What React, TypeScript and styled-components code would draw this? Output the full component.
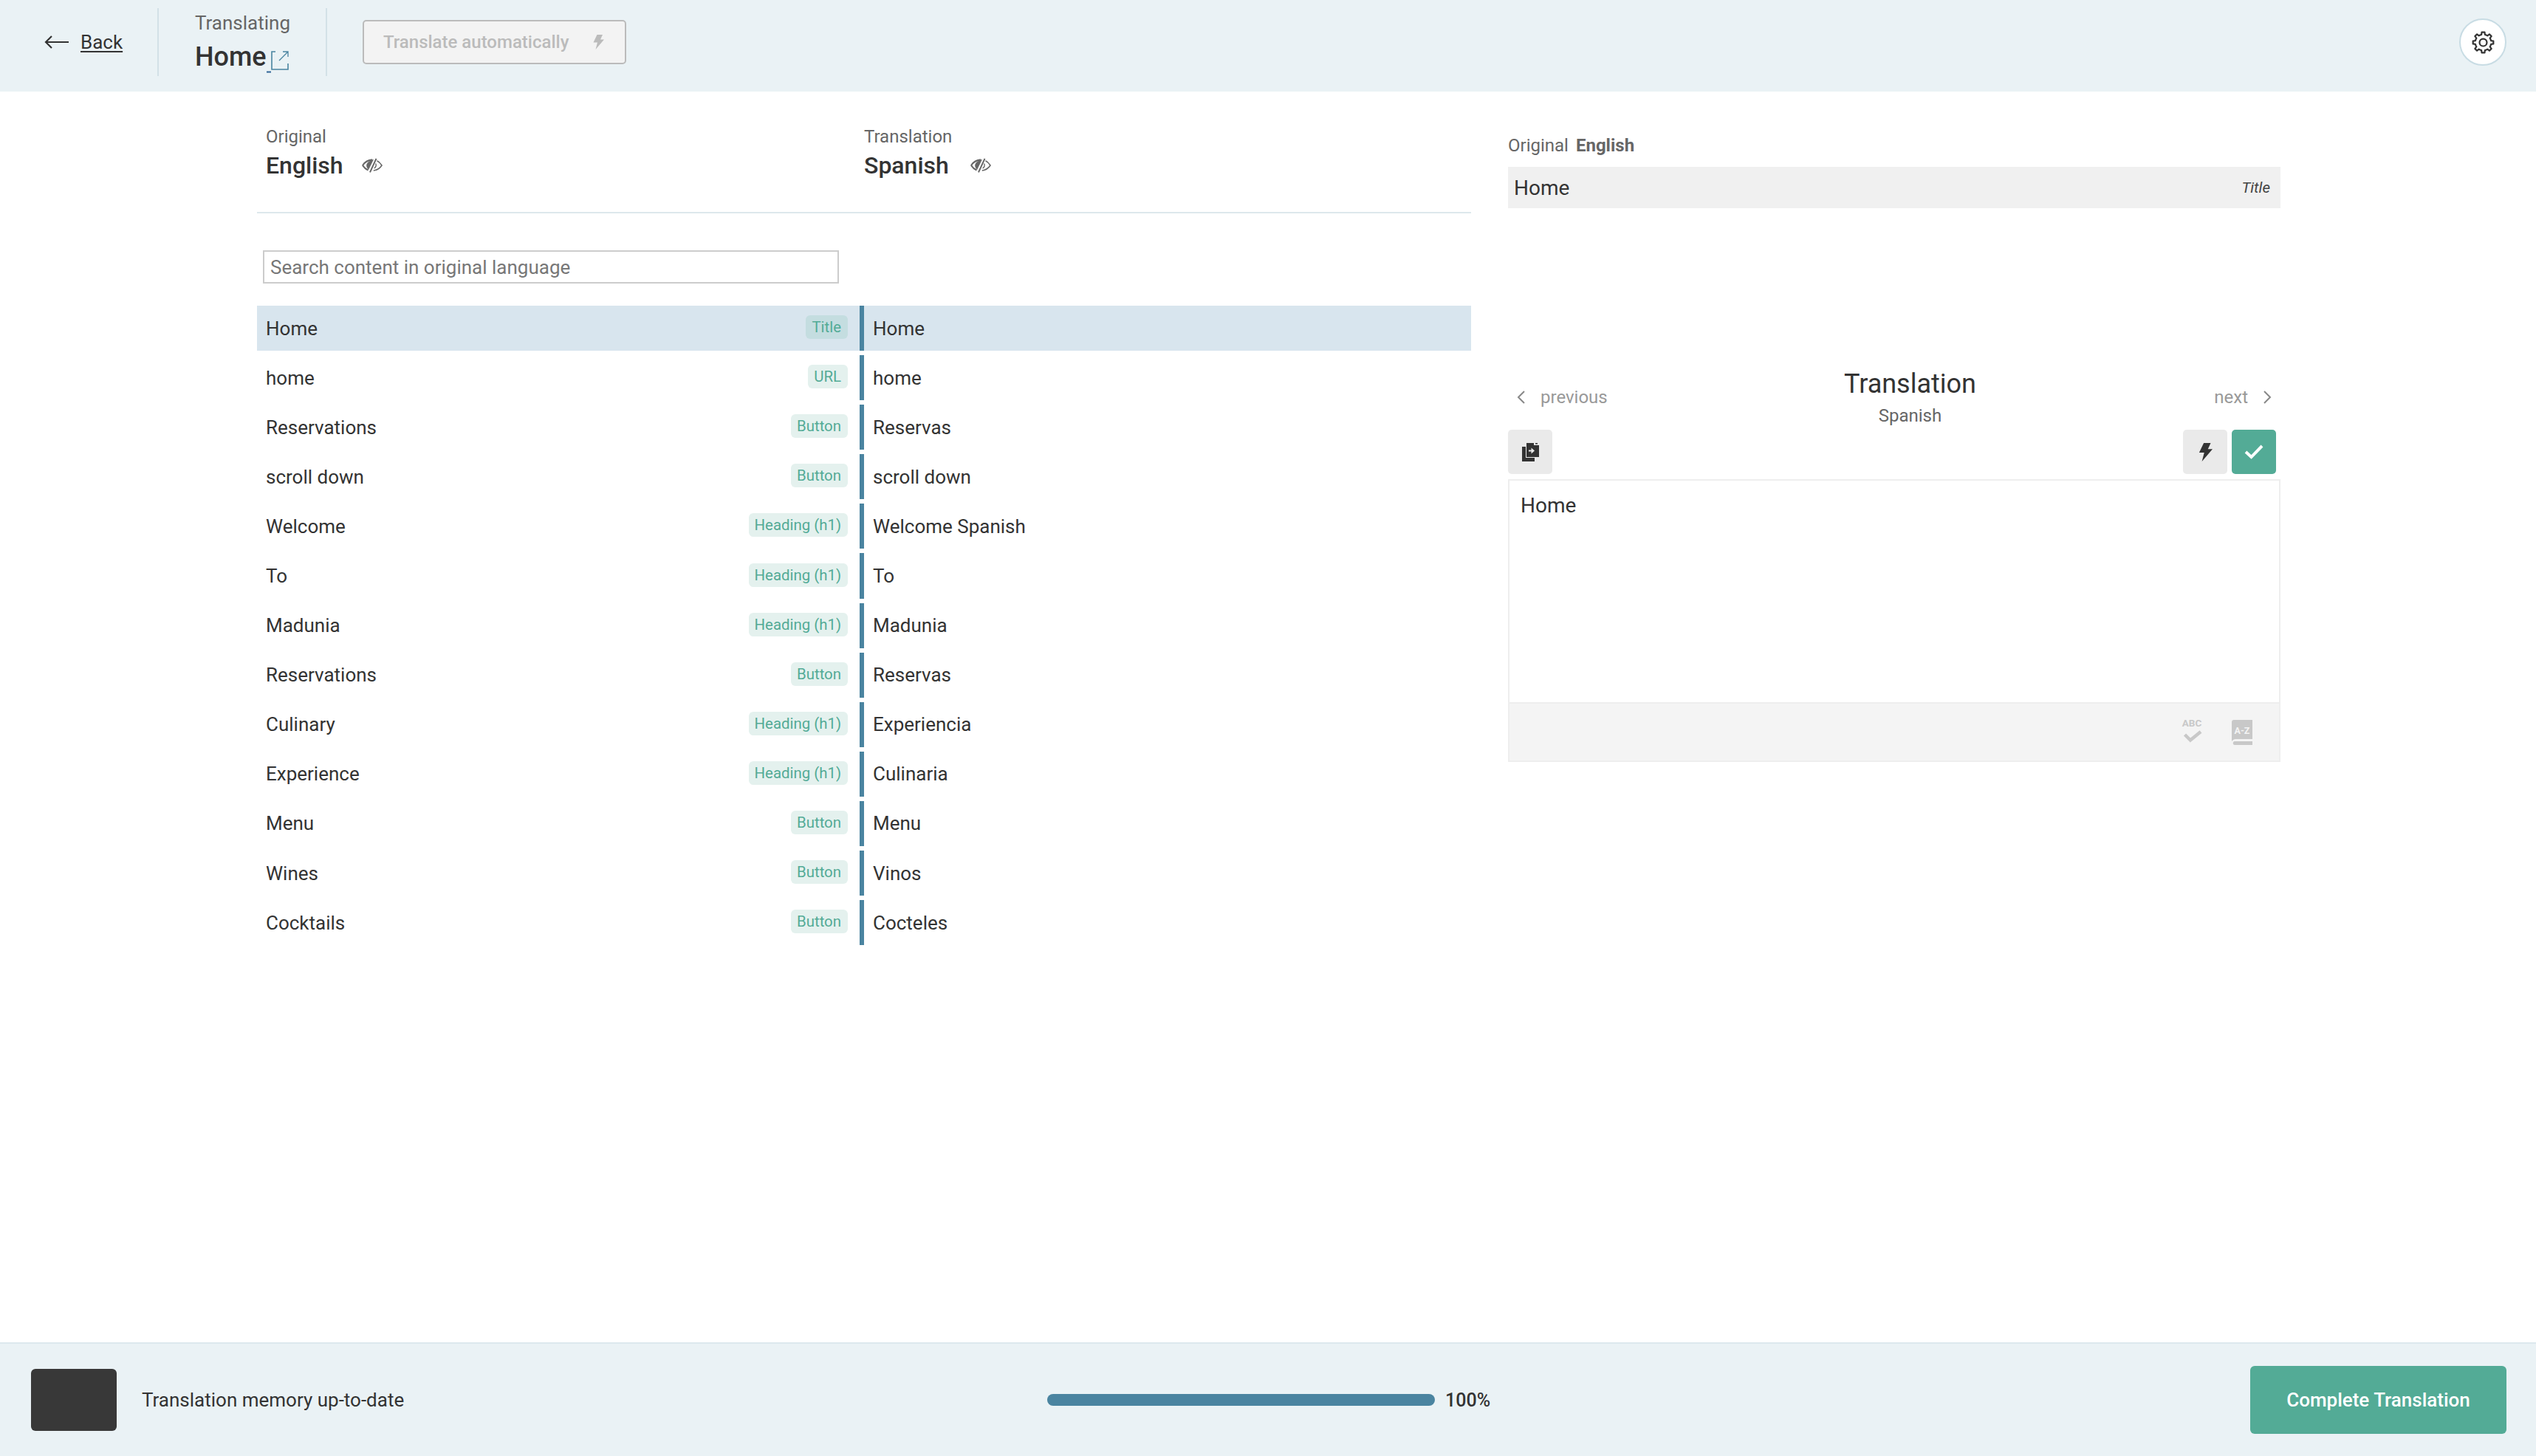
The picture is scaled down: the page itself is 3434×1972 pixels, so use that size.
import React from "react";
import styled, { createGlobalStyle } from "styled-components";

const GlobalStyle = createGlobalStyle`
  html, body {
    margin: 0;
    padding: 0;
    background: #fff;
  }
  * {
    box-sizing: border-box;
  }
`;

type RowData = { source: string; kind: string; target: string };

const rows: RowData[] = [
  { source: "Home", kind: "Title", target: "Home" },
  { source: "home", kind: "URL", target: "home" },
  { source: "Reservations", kind: "Button", target: "Reservas" },
  { source: "scroll down", kind: "Button", target: "scroll down" },
  { source: "Welcome", kind: "Heading (h1)", target: "Welcome Spanish" },
  { source: "To", kind: "Heading (h1)", target: "To" },
  { source: "Madunia", kind: "Heading (h1)", target: "Madunia" },
  { source: "Reservations", kind: "Button", target: "Reservas" },
  { source: "Culinary", kind: "Heading (h1)", target: "Experiencia" },
  { source: "Experience", kind: "Heading (h1)", target: "Culinaria" },
  { source: "Menu", kind: "Button", target: "Menu" },
  { source: "Wines", kind: "Button", target: "Vinos" },
  { source: "Cocktails", kind: "Button", target: "Cocteles" },
];

// gear outline with 8 teeth
const gearPath = () => {
  const points: string[] = [];
  const teeth = 8;
  for (let i = 0; i < teeth; i++) {
    const a = (i / teeth) * Math.PI * 2 - Math.PI / 2;
    const step = (Math.PI * 2) / teeth;
    const pts: [number, number][] = [
      [a - step * 0.5, 9.8],
      [a - step * 0.28, 9.8],
      [a - step * 0.18, 12.6],
      [a + step * 0.18, 12.6],
      [a + step * 0.28, 9.8],
    ];
    pts.forEach(([t, r]) => {
      points.push(`${(14 + r * Math.cos(t)).toFixed(2)} ${(14 + r * Math.sin(t)).toFixed(2)}`);
    });
  }
  return `M${points.join("L")}Z`;
};

const BoltIcon = ({ size = 20, color = "#333" }: { size?: number; color?: string }) => (
  <svg width={size} height={size * 1.25} viewBox="0 0 16 20" fill={color}>
    <path d="M6.5 0H14L11 6.6H16L4.5 20L7 10.4H1.5Z" />
  </svg>
);

const EyeOffIcon = () => (
  <svg width="28" height="20" viewBox="0 0 28 20" fill="none" stroke="#666">
    <path d="M1 10C4 5.5 8 2.8 14 2.4" strokeWidth="2.2" />
    <path d="M1 10C3 13 5 15 8.5 16.5" strokeWidth="2.2" />
    <path d="M15.5 2.2C11 3 6.5 6.5 6.5 10C6.5 12 7.5 14 9 15.5Z" fill="#666" strokeWidth="0.6" />
    <path d="M19.5 0.8L11 19.4" strokeWidth="2" />
    <path d="M20.5 3.8C23.2 5 25.2 7.2 27 10C24.6 13.6 21 16.4 15.8 17" strokeWidth="1.6" />
    <path d="M18.6 7.5C20 9.8 19 12.6 16.6 14" strokeWidth="1.4" />
  </svg>
);

const Page = styled.div`
  display: flex;
  flex-direction: column;
  width: 3434px;
  height: 1972px;
  overflow: hidden;
  font-family: Roboto, "Liberation Sans", sans-serif;
  color: #333;
  background: #fff;
`;

const TopBar = styled.header`
  display: flex;
  align-items: center;
  height: 124px;
  flex: none;
  padding: 0 40px 10px 0;
  background: #eaf2f5;
`;

const BackLink = styled.a`
  display: flex;
  align-items: center;
  gap: 16px;
  width: 213px;
  padding-left: 60px;
  font-size: 26px;
  color: #333;
  text-decoration: underline;
  text-underline-offset: 3px;
`;

const Divider = styled.div`
  width: 2px;
  height: 92px;
  background: #d3e1e7;
  flex: none;
`;

const PageInfo = styled.div`
  display: flex;
  flex-direction: column;
  width: 226px;
  padding-left: 49px;
`;

const InfoLabel = styled.span`
  font-size: 26px;
  line-height: 32px;
  color: #666;
`;

const PageTitle = styled.span`
  display: flex;
  align-items: flex-end;
  margin-top: 8px;
  font-size: 36px;
  line-height: 44px;
  font-weight: 500;
  color: #333;
`;

const AutoButton = styled.button`
  display: flex;
  align-items: center;
  justify-content: space-between;
  width: 357px;
  height: 60px;
  margin-left: 48px;
  padding: 0 28px 0 26px;
  border: 2px solid #bbb;
  border-radius: 5px;
  background: #f3f3f3;
  font-family: inherit;
  font-size: 24px;
  font-weight: 500;
  color: #bbb;
`;

const SettingsButton = styled.button`
  display: flex;
  align-items: center;
  justify-content: center;
  width: 64px;
  height: 64px;
  margin-left: auto;
  padding: 0;
  border: 2px solid #c8dce4;
  border-radius: 50%;
  background: #fff;
`;

const Main = styled.main`
  display: flex;
  flex: 1;
  gap: 50px;
  padding: 45px 0 0 348px;
`;

const ListColumn = styled.section`
  display: flex;
  flex-direction: column;
  width: 1644px;
`;

const LanguageRow = styled.div`
  display: grid;
  grid-template-columns: 810px 1fr;
  height: 120px;
  padding-left: 12px;
  border-bottom: 2px solid #dde8ec;
`;

const LanguageBlock = styled.div`
  display: flex;
  flex-direction: column;
`;

const LanguageLabel = styled.span`
  font-size: 24px;
  line-height: 32px;
  color: #666;
`;

const LanguageName = styled.span<{ $gap: number }>`
  display: flex;
  align-items: center;
  gap: ${(p) => p.$gap}px;
  margin-top: 3px;
  font-size: 32px;
  line-height: 40px;
  font-weight: 500;
  color: #333;
`;

const SearchInput = styled.input`
  display: block;
  width: 780px;
  height: 45px;
  margin: 50px 0 30px 8px;
  padding: 0 8px;
  border: 2px solid #ccc;
  border-radius: 0;
  font-family: inherit;
  font-size: 26px;
  color: #333;
  outline: none;

  &::placeholder {
    color: #777;
    opacity: 1;
  }
`;

const RowList = styled.div`
  display: flex;
  flex-direction: column;
  gap: 6px;
`;

const Row = styled.div<{ $active?: boolean }>`
  display: grid;
  grid-template-columns: 816px 6px 1fr;
  height: 61.1px;
  font-size: 26px;
  color: #333;
  background: ${(p) => (p.$active ? "#d8e5ee" : "transparent")};
`;

const SourceCell = styled.div`
  display: flex;
  align-items: center;
  justify-content: space-between;
  padding: 0 16px 0 12px;
`;

const RowBar = styled.div`
  background: #4a84a0;
`;

const TargetCell = styled.div`
  display: flex;
  align-items: center;
  padding-left: 12px;
`;

const Badge = styled.span<{ $active?: boolean }>`
  display: flex;
  align-items: center;
  height: 32px;
  margin-top: -3px;
  padding: 0 9px 0 8px;
  border-radius: 6px;
  font-size: 20.4px;
  color: #53ab96;
  background: ${(p) => (p.$active ? "#c4dde0" : "#e4f1ee")};
`;

const EditorColumn = styled.aside`
  display: flex;
  flex-direction: column;
  width: 1046px;
`;

const OriginalLabel = styled.div`
  display: flex;
  gap: 10px;
  height: 57px;
  padding-top: 12px;
  font-size: 24px;
  line-height: 32px;
  color: #666;
`;

const OriginalName = styled.span`
  font-weight: 700;
  color: #666;
`;

const OriginalBar = styled.div`
  display: flex;
  align-items: center;
  justify-content: space-between;
  height: 56px;
  padding: 0 14px 0 8px;
  background: #f0f0f0;
  font-size: 28px;
  color: #333;
`;

const KindNote = styled.span`
  font-size: 20.5px;
  font-style: italic;
  color: #444;
`;

const TranslationHead = styled.div`
  display: grid;
  grid-template-columns: 1fr auto 1fr;
  height: 84px;
  margin-top: 216px;
`;

const HeadTitle = styled.div`
  display: flex;
  flex-direction: column;
  align-items: center;
  padding-left: 43px;
`;

const TitleText = styled.span`
  font-size: 36px;
  line-height: 44px;
  color: #333;
`;

const SubText = styled.span`
  margin-top: 4px;
  font-size: 24px;
  line-height: 34px;
  color: #666;
`;

const PagerLink = styled.a<{ $right?: boolean }>`
  display: flex;
  align-items: center;
  justify-content: ${(p) => (p.$right ? "flex-end" : "flex-start")};
  gap: 20px;
  height: 44px;
  margin-top: 18px;
  padding: 0 12px;
  font-size: 24px;
  color: #999;
`;

const ActionRow = styled.div`
  display: flex;
  align-items: flex-start;
  height: 67px;
  padding-right: 6px;
`;

const ActionButton = styled.button<{ $primary?: boolean }>`
  display: flex;
  align-items: center;
  justify-content: center;
  width: 60px;
  height: 60px;
  padding: 0;
  border: none;
  border-radius: 5px;
  background: ${(p) => (p.$primary ? "#53ab96" : "#eaeaea")};
`;

const Spacer = styled.div`
  flex: 1;
`;

const ActionGap = styled.div`
  width: 6px;
`;

const EditorBox = styled.div`
  display: flex;
  flex-direction: column;
  height: 383px;
  border: 2px solid #eee;
`;

const EditorText = styled.div`
  flex: 1;
  padding: 16px 15px;
  font-size: 28px;
  line-height: 36px;
  color: #333;
`;

const EditorTools = styled.div`
  display: flex;
  align-items: center;
  justify-content: flex-end;
  gap: 39px;
  height: 79px;
  padding-right: 36px;
  border-top: 2px solid #eee;
  background: #f4f4f4;

  svg {
    overflow: visible;
  }
`;

const Footer = styled.footer`
  display: flex;
  align-items: center;
  flex: none;
  height: 154px;
  padding: 0 40px 0 42px;
  border-top: 2px solid #dce8ee;
  background: #eaf2f5;
`;

const DarkSwatch = styled.div`
  width: 116px;
  height: 84px;
  border-radius: 6px;
  background: #383838;
`;

const MemoryText = styled.span`
  width: 1226px;
  margin-left: 34px;
  font-size: 26px;
  color: #333;
`;

const ProgressTrack = styled.div`
  width: 525px;
  height: 16px;
  border-radius: 8px;
  overflow: hidden;
  background: #d3e1e7;
`;

const ProgressFill = styled.div`
  height: 100%;
  background: #4a84a0;
`;

const ProgressValue = styled.span`
  margin-left: 14px;
  font-size: 25px;
  font-weight: 500;
  color: #333;
`;

const CompleteButton = styled.button`
  width: 347px;
  height: 92px;
  margin-left: auto;
  border: none;
  border-radius: 6px;
  background: #53ab96;
  font-family: inherit;
  font-size: 26px;
  font-weight: 500;
  color: #fff;
`;

export default function App() {
  return (
    <Page>
      <GlobalStyle />
      <TopBar>
        <BackLink>
          <svg width="33" height="20" viewBox="0 0 33 20" fill="none" stroke="#333" strokeWidth="2.2">
            <path d="M33 10H2M10 2L2 10L10 18" />
          </svg>
          Back
        </BackLink>
        <Divider />
        <PageInfo>
          <InfoLabel>Translating</InfoLabel>
          <PageTitle>
            Home
            <svg width="30" height="30" viewBox="0 0 30 30" fill="none" stroke="#4a84a0" strokeWidth="1.6">
              <path d="M0 28.5H6" stroke="#2f6496" strokeWidth="2" />
              <path d="M12 1H7V25H29V17" />
              <path d="M17 13L29 1M22 1H29V8" strokeWidth="1.3" />
            </svg>
          </PageTitle>
        </PageInfo>
        <Divider />
        <AutoButton>
          Translate automatically
          <BoltIcon size={16} color="#bbb" />
        </AutoButton>
        <SettingsButton>
          <svg width="31" height="31" viewBox="0 0 28 28" fill="none" stroke="#333" strokeWidth="2" strokeLinejoin="round">
            <path d={gearPath()} />
            <circle cx="14" cy="14" r="4.5" />
          </svg>
        </SettingsButton>
      </TopBar>

      <Main>
        <ListColumn>
          <LanguageRow>
            <LanguageBlock>
              <LanguageLabel>Original</LanguageLabel>
              <LanguageName $gap={25}>
                English
                <EyeOffIcon />
              </LanguageName>
            </LanguageBlock>
            <LanguageBlock>
              <LanguageLabel>Translation</LanguageLabel>
              <LanguageName $gap={29}>
                Spanish
                <EyeOffIcon />
              </LanguageName>
            </LanguageBlock>
          </LanguageRow>
          <SearchInput placeholder="Search content in original language" />
          <RowList>
            {rows.map((row, i) => (
              <Row key={i} $active={i === 0}>
                <SourceCell>
                  {row.source}
                  <Badge $active={i === 0}>{row.kind}</Badge>
                </SourceCell>
                <RowBar />
                <TargetCell>{row.target}</TargetCell>
              </Row>
            ))}
          </RowList>
        </ListColumn>

        <EditorColumn>
          <OriginalLabel>
            Original <OriginalName>English</OriginalName>
          </OriginalLabel>
          <OriginalBar>
            Home
            <KindNote>Title</KindNote>
          </OriginalBar>

          <TranslationHead>
            <PagerLink>
              <svg width="12" height="20" viewBox="0 0 12 20" fill="none" stroke="#888" strokeWidth="2">
                <path d="M10 2L2 10L10 18" />
              </svg>
              previous
            </PagerLink>
            <HeadTitle>
              <TitleText>Translation</TitleText>
              <SubText>Spanish</SubText>
            </HeadTitle>
            <PagerLink $right>
              next
              <svg width="12" height="20" viewBox="0 0 12 20" fill="none" stroke="#888" strokeWidth="2">
                <path d="M2 2L10 10L2 18" />
              </svg>
            </PagerLink>
          </TranslationHead>

          <ActionRow>
            <ActionButton>
              <svg width="23" height="25" viewBox="0 0 23 25" fill="#333">
                <path d="M0 5H5V20H17V25H0Z" />
                <path fillRule="evenodd" d="M6 0H16V3H23V19H6ZM9 9.5V11.5H12.5V14.5L17 10.5L12.5 6.5V9.5Z" />
                <path d="M18 0H21V1.5H18Z" />
              </svg>
            </ActionButton>
            <Spacer />
            <ActionButton>
              <BoltIcon size={20} />
            </ActionButton>
            <ActionGap />
            <ActionButton $primary>
              <svg width="26" height="20" viewBox="0 0 26 20" fill="none" stroke="#fff" strokeWidth="4">
                <path d="M2 10L9.5 17L24 2" />
              </svg>
            </ActionButton>
          </ActionRow>

          <EditorBox>
            <EditorText>Home</EditorText>
            <EditorTools>
              <svg width="30" height="36" viewBox="0 0 30 36" fill="#c8c8c8">
                <text x="15" y="10" textAnchor="middle" fontSize="13.5" fontWeight="700" fontFamily="Roboto, sans-serif">
                  ABC
                </text>
                <path d="M5.5 21L13 28.5L27 17" fill="none" stroke="#c8c8c8" strokeWidth="4.5" />
              </svg>
              <svg width="28" height="34" viewBox="0 0 28 34">
                <path d="M3 0H28V26H5C3 26 2 27 1 28L0 29V3C0 1 1 0 3 0Z" fill="#c8c8c8" />
                <path d="M4 29H28V34H4C1 34 1 29 4 29Z" fill="#c8c8c8" />
                <text x="14" y="19" textAnchor="middle" fontSize="12.5" fontWeight="700" fontFamily="Roboto, sans-serif" fill="#f4f4f4">
                  A-Z
                </text>
              </svg>
            </EditorTools>
          </EditorBox>
        </EditorColumn>
      </Main>

      <Footer>
        <DarkSwatch />
        <MemoryText>Translation memory up-to-date</MemoryText>
        <ProgressTrack>
          <ProgressFill style={{ width: "100%" }} />
        </ProgressTrack>
        <ProgressValue>100%</ProgressValue>
        <CompleteButton>Complete Translation</CompleteButton>
      </Footer>
    </Page>
  );
}
